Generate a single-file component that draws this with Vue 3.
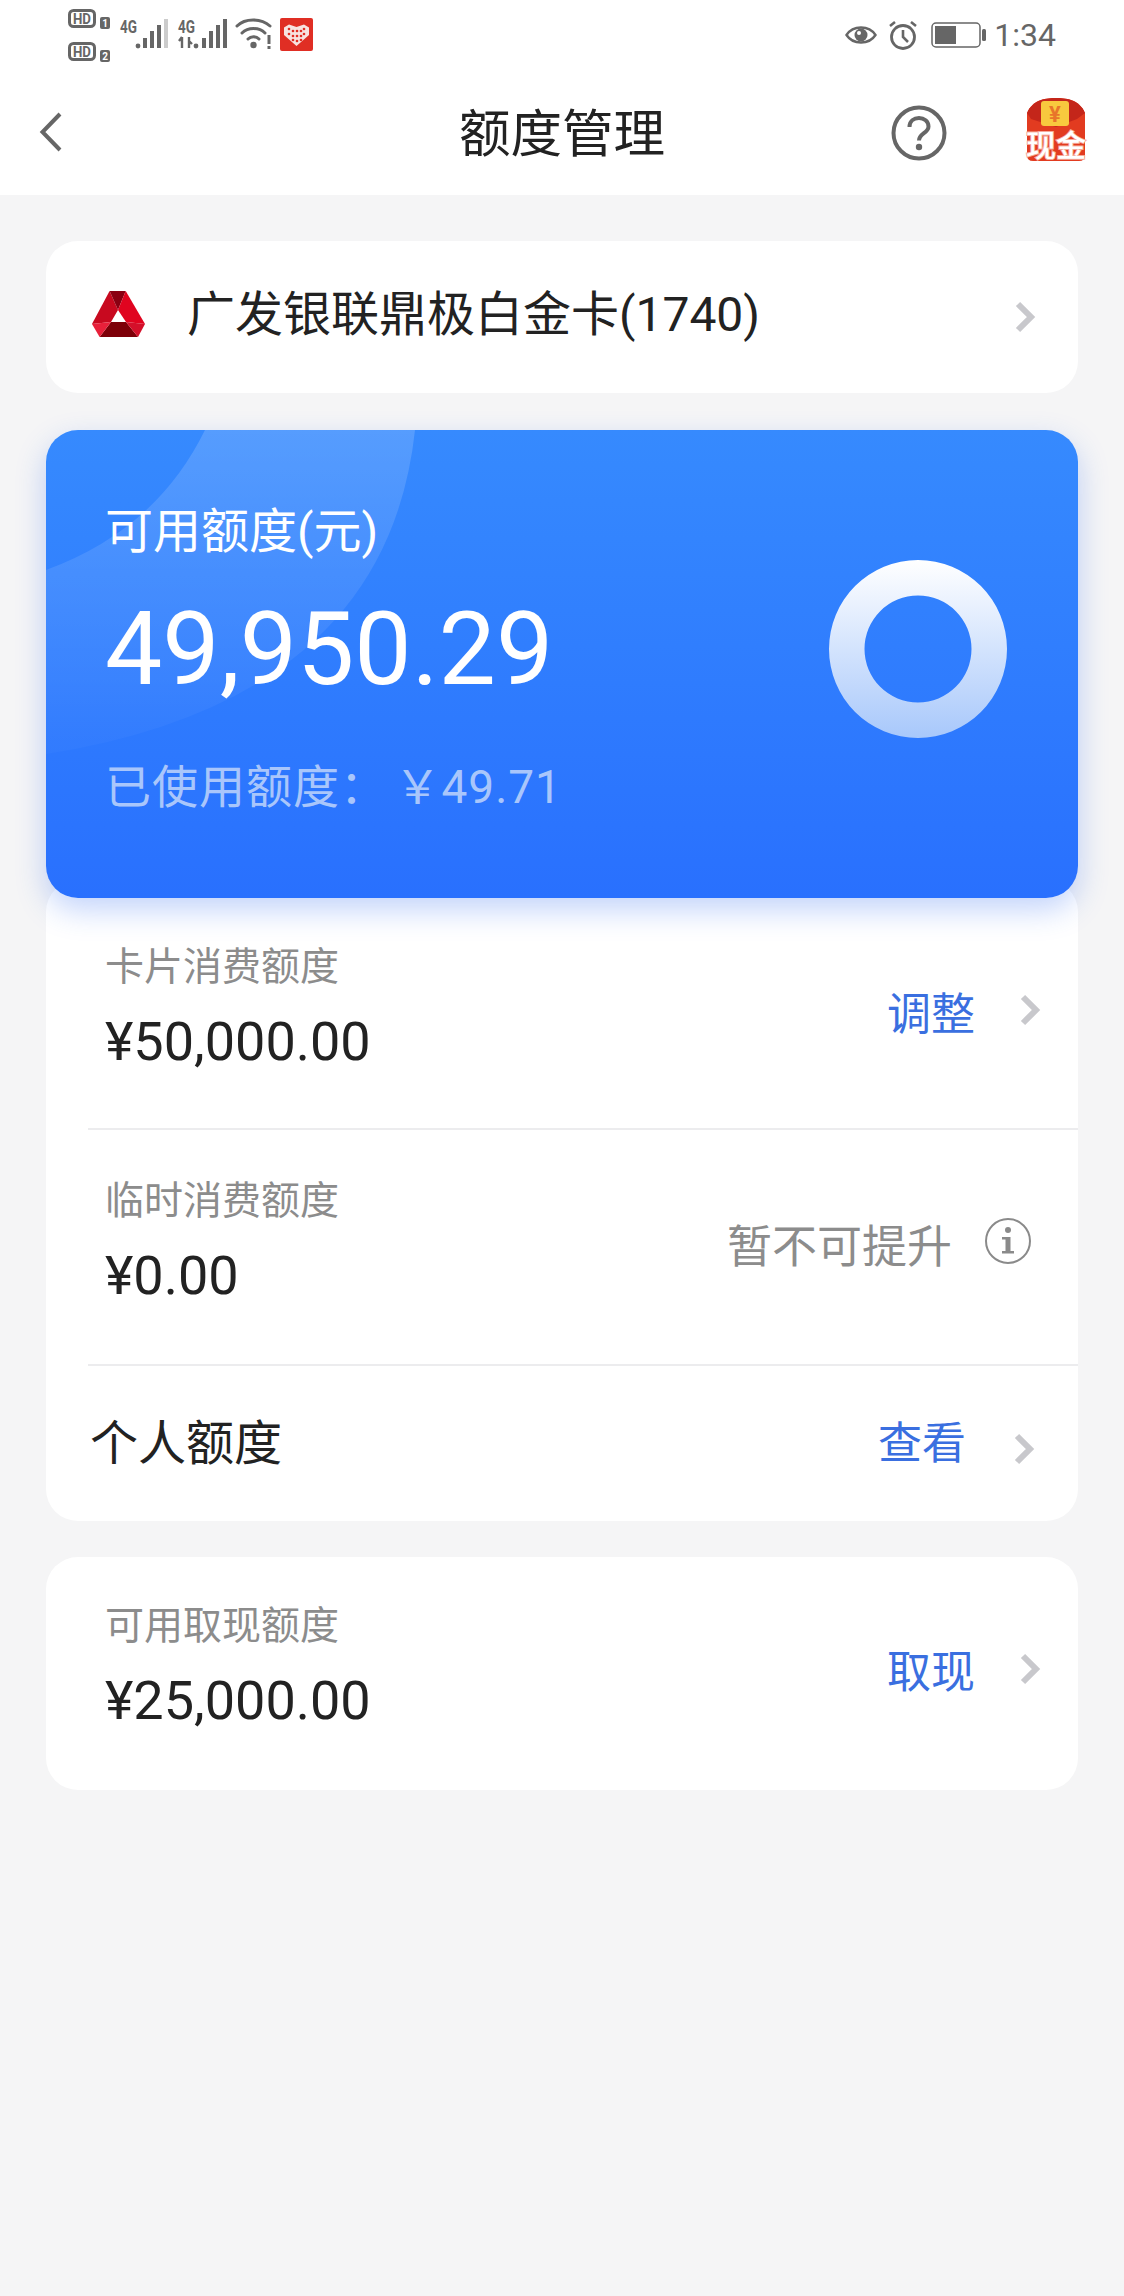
<template>
  <div class="page">
    <header class="top">
      <div class="status">
        <div class="status-left">
          <svg class="ic-hd" width="44" height="53" viewBox="0 0 44 53">
            <g v-for="(n, i) in ['1', '2']" :key="n" :transform="`translate(0 ${i * 33})`">
              <rect x="1.500" y="1.500" width="25" height="16" rx="4" fill="none" stroke="#666" stroke-width="3" />
              <text x="14" y="15" text-anchor="middle" font-size="15" font-weight="700" fill="#666" font-family="Roboto, sans-serif" textLength="18" lengthAdjust="spacingAndGlyphs">HD</text>
              <rect x="32" y="8" width="10" height="12" rx="2" fill="#666" />
              <text x="37" y="18" text-anchor="middle" font-size="10" font-weight="700" fill="#fff" font-family="Roboto, sans-serif">{{ n }}</text>
            </g>
          </svg>
          <svg class="ic-sig" width="48" height="30" viewBox="0 0 48 30">
            <text x="0" y="14" font-size="18" font-weight="700" fill="#666" font-family="Roboto, sans-serif" textLength="17" lengthAdjust="spacingAndGlyphs">4G</text>
            <circle cx="18" cy="27" r="2.400" fill="#666" />
            <rect x="23" y="19" width="4" height="10" fill="#666" />
            <rect x="30" y="12" width="4" height="17" fill="#666" />
            <rect x="37" y="6" width="4" height="23" fill="#666" />
            <rect x="44" y="0" width="4" height="29" fill="#ccc" />
          </svg>
          <svg class="ic-sig2" width="50" height="30" viewBox="0 0 50 30">
            <text x="0" y="14" font-size="18" font-weight="700" fill="#666" font-family="Roboto, sans-serif" textLength="17" lengthAdjust="spacingAndGlyphs">4G</text>
            <path d="M4 18v11M1 22l3-4M11 18v11M11 22l3 3" stroke="#666" stroke-width="2.400" fill="none" />
            <circle cx="18" cy="27" r="2.400" fill="#666" />
            <rect x="24" y="19" width="4" height="10" fill="#666" />
            <rect x="31" y="12" width="4" height="17" fill="#666" />
            <rect x="38" y="6" width="4" height="23" fill="#666" />
            <rect x="45" y="0" width="4" height="29" fill="#666" />
          </svg>
          <svg class="ic-wifi" width="36" height="32" viewBox="0 0 36 32">
            <path d="M1 8C9 0 25 0 34 8M6 15c6-6 17-6 23 0M12 21c3-3 8-3 11 0" fill="none" stroke="#666" stroke-width="3" stroke-linecap="round" />
            <circle cx="17.500" cy="27" r="3.200" fill="#666" />
            <rect x="31.500" y="17" width="3" height="9" fill="#666" />
            <rect x="31.500" y="28" width="3" height="3" fill="#666" />
          </svg>
          <svg class="ic-pdd" width="33" height="33" viewBox="0 0 33 33">
            <rect width="33" height="33" rx="2" fill="#e02e24" />
            <path d="M16.500 28L4 17V9.500l5-3 7.500 2.500L24 6.500l5 3V17z" fill="#f7e3e0" />
            <g fill="#e02e24">
              <circle v-for="d in heartDots" :key="d[0] + '-' + d[1]" :cx="d[0]" :cy="d[1]" r="1.300" />
            </g>
          </svg>
        </div>
        <div class="status-right">
          <svg width="32" height="24" viewBox="0 0 32 24">
            <path d="M1.500 12C8 2 24 2 30.500 12 24 22 8 22 1.500 12z" fill="none" stroke="#666" stroke-width="2.400" />
            <circle cx="16" cy="12" r="6.500" fill="#666" />
            <circle cx="14" cy="10" r="2" fill="#fff" />
          </svg>
          <svg class="ic-alarm" width="30" height="30" viewBox="0 0 30 30">
            <circle cx="15" cy="17" r="11.500" fill="none" stroke="#666" stroke-width="2.800" />
            <path d="M15 10v7l5 5M2 6l5-4M28 6l-5-4" fill="none" stroke="#666" stroke-width="2.600" />
          </svg>
          <svg class="ic-batt" width="56" height="26" viewBox="0 0 56 26">
            <rect x="1" y="1" width="48" height="24" rx="4" fill="none" stroke="#666" stroke-width="1.500" />
            <rect x="4" y="4" width="21" height="18" fill="#666" />
            <rect x="51" y="7" width="4" height="12" rx="1.500" fill="#666" />
          </svg>
          <span class="time">1:34</span>
        </div>
      </div>
      <nav class="nav">
        <svg class="back" width="24" height="42" viewBox="0 0 24 42">
          <path d="M21 3L3.500 21 21 39" fill="none" stroke="#666" stroke-width="4" />
        </svg>
        <h1 class="title">额度管理</h1>
        <svg class="help" width="56" height="56" viewBox="0 0 56 56">
          <circle cx="28" cy="28" r="25.500" fill="none" stroke="#666" stroke-width="4" />
          <path d="M18.500 22c0-6 4.500-9 9.500-9s9.500 3.300 9.500 8.500c0 6.500-9.500 7-9.500 14" fill="none" stroke="#666" stroke-width="4" />
          <circle cx="28" cy="42" r="3.200" fill="#666" />
        </svg>
        <svg class="packet" width="62" height="66" viewBox="0 0 62 66">
          <path d="M2 16C8 2 22 1 31 1s23 1 29 15v42q0 6-6 6H8q-6 0-6-6z" fill="#e23b20" />
          <path d="M2 16C8 2 22 1 31 1s23 1 29 15l-8 6-21 8-25-8z" fill="#c4261a" />
          <rect x="16" y="4" width="28" height="25" rx="3" fill="#f8c93e" />
          <text x="30" y="25" text-anchor="middle" font-size="22" font-weight="700" fill="#e8752a" font-family="Roboto, sans-serif">¥</text>
          <text class="packet-text" x="31" y="59" text-anchor="middle" font-size="30" font-weight="500" fill="#fff" font-family="'Noto Sans CJK SC', sans-serif">现金</text>
        </svg>
      </nav>
    </header>

    <main class="content">
      <section class="card card-select">
        <svg class="bank-logo" width="53" height="46" viewBox="0 0 53 46">
          <polygon points="17.600,0 26,19 19,31 0,33" fill="#c8091f" />
          <polygon points="17.600,0 33.700,0 26,19" fill="#8a0012" />
          <polygon points="33.700,0 53,33 34,31 26,19" fill="#e0041f" />
          <polygon points="19,31 34,31 46,46 7.600,46" fill="#7d0008" />
          <polygon points="0,33 19,31 7.600,46" fill="#e8203a" />
          <polygon points="53,33 34,31 46,46" fill="#d4102a" />
        </svg>
        <span class="card-name">广发银联鼎极白金卡(1740)</span>
        <svg class="arrow arrow-select" width="20" height="32" viewBox="0 0 20 32">
          <path d="M3 3l13 13L3 29" fill="none" stroke="#c8c8cc" stroke-width="6" />
        </svg>
      </section>

      <section class="quota">
        <svg class="quota-band" width="420" height="330" viewBox="0 0 420 330">
          <defs>
            <linearGradient id="bandFade" x1="0" y1="0" x2="0" y2="1">
              <stop offset="0" stop-color="#fff" stop-opacity="0.16" />
              <stop offset="1" stop-color="#fff" stop-opacity="0.02" />
            </linearGradient>
          </defs>
          <path d="M159 0H369Q340 270 0 324V140Q110 100 159 0z" fill="url(#bandFade)" />
        </svg>
        <div class="quota-text">
          <div class="quota-label">可用额度(元)</div>
          <div class="quota-amount">49,950.29</div>
          <div class="quota-used">已使用额度： <span class="used-num">￥49.71</span></div>
        </div>
        <svg class="ring" width="178" height="178" viewBox="0 0 178 178">
          <defs>
            <linearGradient id="ringFade" x1="0" y1="0" x2="0" y2="1">
              <stop offset="0" stop-color="#fff" />
              <stop offset="1" stop-color="#a8c8fb" />
            </linearGradient>
          </defs>
          <path d="M89 0a89 89 0 1 0 0 178a89 89 0 1 0 0-178zM89 35.500a53.500 53.500 0 1 1 0 107a53.500 53.500 0 1 1 0-107z" fill="url(#ringFade)" fill-rule="evenodd" />
        </svg>
      </section>

      <section class="card card-limits">
        <div class="row row-card">
          <div class="cell">
            <div class="cell-label">卡片消费额度</div>
            <div class="cell-value">¥50,000.00</div>
          </div>
          <span class="link link-a">调整</span>
          <svg class="arrow" width="20" height="32" viewBox="0 0 20 32">
            <path d="M3 3l13 13L3 29" fill="none" stroke="#c8c8cc" stroke-width="6" />
          </svg>
        </div>
        <div class="row row-temp">
          <div class="cell">
            <div class="cell-label">临时消费额度</div>
            <div class="cell-value">¥0.00</div>
          </div>
          <span class="muted">暂不可提升</span>
          <svg class="info" width="46" height="46" viewBox="0 0 46 46">
            <circle cx="23" cy="23" r="22" fill="none" stroke="#8a8a8a" stroke-width="2" />
            <circle cx="23" cy="12" r="3" fill="#8a8a8a" />
            <path d="M17 19h8.500v14H29v2.500H17V33h3.500V21.500H17z" fill="#8a8a8a" />
          </svg>
        </div>
        <div class="row row-personal">
          <span class="personal">个人额度</span>
          <span class="link">查看</span>
          <svg class="arrow arrow-b" width="20" height="32" viewBox="0 0 20 32">
            <path d="M3 3l13 13L3 29" fill="none" stroke="#c8c8cc" stroke-width="6" />
          </svg>
        </div>
      </section>

      <section class="card card-cash">
        <div class="cell">
          <div class="cell-label">可用取现额度</div>
          <div class="cell-value">¥25,000.00</div>
        </div>
        <span class="link">取现</span>
        <svg class="arrow" width="20" height="32" viewBox="0 0 20 32">
          <path d="M3 3l13 13L3 29" fill="none" stroke="#c8c8cc" stroke-width="6" />
        </svg>
      </section>
    </main>
  </div>
</template>

<script setup>
// 拼多多图标上的小圆点
const heartDots = [
  [9, 11], [13, 13], [9, 16], [13, 18], [17, 13], [17, 18],
  [21, 13], [24, 11], [21, 18], [24, 16], [17, 23], [13, 22], [21, 22],
]
</script>

<style>
html,
body {
  margin: 0;
  background: #f5f5f6;
}
</style>

<style scoped>
.page {
  width: 1124px;
  min-height: 2296px;
  background: #f5f5f6;
  font-family: Roboto, "Noto Sans CJK SC", sans-serif;
  color: #222;
}

svg {
  overflow: visible;
}

.top {
  height: 195px;
  background: #fff;
}

.status {
  height: 70px;
  display: flex;
  justify-content: space-between;
  padding: 0 68px;
  box-sizing: border-box;
}

.status-left {
  display: flex;
  align-items: flex-start;
  padding-top: 9px;
}

.ic-sig {
  margin: 10px 0 0 8px;
}

.ic-sig2 {
  margin: 10px 0 0 10px;
}

.ic-wifi {
  margin: 9px 0 0 8px;
}

.ic-pdd {
  margin: 9px 0 0 8px;
}

.status-right {
  display: flex;
  align-items: center;
}

.ic-alarm {
  margin-left: 11px;
}

.ic-batt {
  margin-left: 13px;
}

.time {
  margin-left: 7px;
  font-size: 32px;
  color: #666;
}

.nav {
  height: 125px;
  display: flex;
  align-items: center;
  position: relative;
  padding: 0 37px 0 39px;
}

.back {
  margin-top: -2px;
}

.title {
  position: absolute;
  left: 0;
  right: 0;
  top: 35px;
  margin: 0;
  text-align: center;
  font-size: 51.500px;
  line-height: 60px;
  font-weight: 400;
  color: #222;
}

.help {
  margin-left: auto;
}

.packet {
  margin-left: 78px;
  margin-top: -5px;
}

.packet-text {
  paint-order: stroke;
  stroke: #f6a99a;
  stroke-width: 2px;
}

.content {
  padding: 46px 46px 0;
  display: flex;
  flex-direction: column;
}

.card {
  background: #fff;
  border-radius: 32px;
}

.card-select {
  height: 152px;
  display: flex;
  align-items: center;
  padding: 0 43px 0 46px;
}

.bank-logo {
  flex: none;
  margin-top: -6px;
}

.card-name {
  margin-left: 42px;
  font-size: 48px;
  line-height: 60px;
  margin-top: -4px;
}

.arrow {
  flex: none;
  margin-left: 45px;
}

.arrow-select {
  margin-left: auto;
}

.quota {
  position: relative;
  z-index: 1;
  margin-top: 37px;
  height: 468px;
  border-radius: 32px;
  background: linear-gradient(180deg, #368afe 0%, #2970fe 100%);
  box-shadow: 0 12px 30px rgba(41, 100, 240, 0.28);
  display: flex;
  align-items: center;
  justify-content: space-between;
  padding: 0 71px 0 59px;
}

.quota-band {
  position: absolute;
  left: 0;
  top: 0;
  border-top-left-radius: 32px;
}

.quota-text {
  position: relative;
  padding-bottom: 10px;
}

.quota-label {
  font-size: 48px;
  line-height: 60px;
  color: #fff;
}

.quota-amount {
  margin-top: 27px;
  font-size: 102px;
  line-height: 120px;
  color: #fff;
}

.quota-used {
  margin-top: 48px;
  font-size: 46px;
  line-height: 60px;
  letter-spacing: 1px;
  color: #a9c6fb;
}

.used-num {
  margin-left: -5px;
}

.ring {
  position: relative;
  margin-bottom: 30px;
}

.card-limits {
  margin-top: -18px;
  padding-top: 18px;
  padding-left: 42px;
}

.row {
  display: flex;
  align-items: center;
  padding-left: 17px;
  padding-right: 38px;
  box-sizing: border-box;
  border-bottom: 2px solid #ececee;
}

.row-card {
  height: 232px;
}

.row-temp {
  height: 236px;
  padding-right: 47px;
}

.row-personal {
  height: 155px;
  border-bottom: 0;
  padding-left: 2px;
  padding-right: 44px;
}

.cell {
  flex: 1;
  margin-bottom: 13px;
}

.cell-label {
  font-size: 39px;
  line-height: 50px;
  color: #8c8c8c;
}

.cell-value {
  margin-top: 20px;
  font-size: 54px;
  line-height: 60px;
  color: #222;
}

.link {
  font-size: 44px;
  line-height: 60px;
  color: #3a6fe0;
}

.link-a {
  margin-top: 4px;
}

.row-card .arrow {
  margin-top: -6px;
}

.arrow-b {
  margin-top: 10px;
  margin-left: 48px;
}

.muted {
  font-size: 45px;
  line-height: 60px;
  color: #8c8c8c;
  margin-top: 2px;
}

.info {
  margin-left: 33px;
  margin-bottom: 12px;
}

.personal {
  flex: 1;
  font-size: 48px;
  line-height: 60px;
  color: #222;
}

.card-cash {
  margin-top: 36px;
  height: 233px;
  display: flex;
  align-items: center;
  padding: 0 38px 0 59px;
  box-sizing: border-box;
}

.card-cash .cell {
  margin-bottom: 16px;
}

.card-cash .link {
  margin-top: -2px;
}

.card-cash .arrow {
  margin-top: -9px;
}
</style>
